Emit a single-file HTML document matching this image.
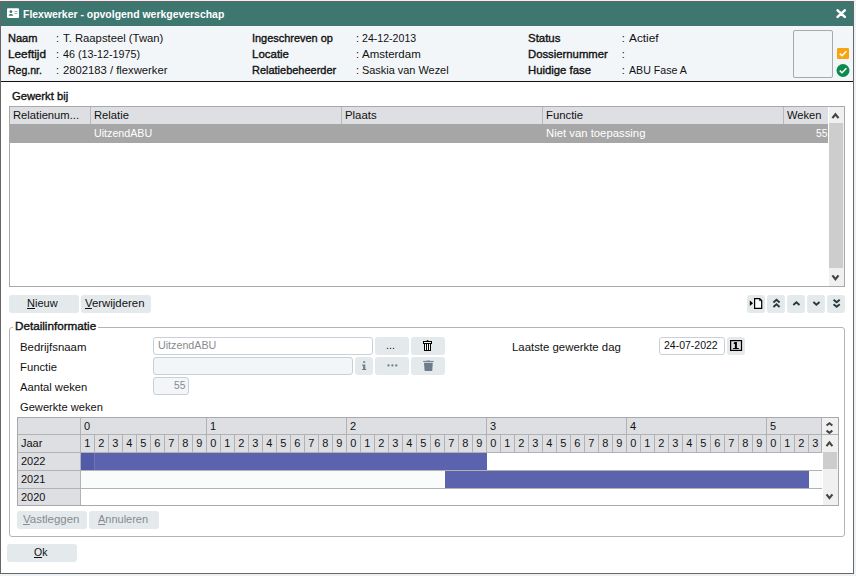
<!DOCTYPE html>
<html><head><meta charset="utf-8">
<style>
*{box-sizing:border-box;margin:0;padding:0}
html,body{width:856px;height:576px;overflow:hidden;background:#eef2f4}
body{font-family:"Liberation Sans",sans-serif;font-size:11px;color:#111;position:relative}
.a{position:absolute}
.t{position:absolute;transform-origin:0 0;white-space:nowrap;line-height:14px;height:14px}
.bb{font-weight:bold}
.b{font-weight:normal;-webkit-text-stroke:.35px}
#win{left:0;top:1px;width:854px;height:573px;border:1px solid #666;background:#fff}
#title{left:1px;top:2px;width:852px;height:24px;background:#3e7670}
#info{left:1px;top:26px;width:852px;height:55px;background:#f3f6f9}
#infoline{left:1px;top:81px;width:852px;height:1px;background:#111}
.btn{position:absolute;background:#e4e9ec;border-radius:3px;height:18px}
.inp{position:absolute;height:18px;border:1px solid #c8cfd6;border-radius:3px;background:#fff}
.dis{background:#f3f6f9}
u{text-decoration:underline}
.hl{position:absolute;background:#b9b9b9;height:1px}
.vl{position:absolute;background:#b9b9b9;width:1px}
</style></head><body>
<div id="win" class="a"></div>
<div id="title" class="a"></div>
<div id="info" class="a"></div>
<div id="infoline" class="a"></div>

<svg class="a" style="left:7px;top:8px" width="12" height="10" viewBox="0 0 12 10"><rect x="0" y="0.2" width="12" height="9.8" rx="1" fill="#fff"/><circle cx="3.9" cy="3.7" r="1.35" fill="#3e7670"/><path d="M1.7 7.7 C1.7 5.5 6.1 5.5 6.1 7.7Z" fill="#3e7670"/><rect x="7.6" y="3" width="2.8" height="1" fill="#3e7670" opacity=".6"/><rect x="7.6" y="5" width="2.8" height="1" fill="#3e7670" opacity=".6"/></svg>
<svg class="a" style="left:836px;top:9px" width="11" height="10" viewBox="0 0 11 10"><path d="M1.6 1.3 L8.8 7.9 M8.8 1.3 L1.6 7.9" stroke="#fff" stroke-width="2.5" stroke-linecap="round"/></svg>

<div class="a" style="left:793px;top:30px;width:40px;height:48px;border:1px solid #a9a9a9;border-radius:2px"></div>
<svg class="a" style="left:837px;top:48px" width="12" height="11" viewBox="0 0 12 11"><rect width="12" height="11" rx="1.2" fill="#f9a30e"/><path d="M2.8 5.6 L5 7.8 L9.4 3.2" stroke="#fff" stroke-width="1.5" fill="none"/></svg>
<svg class="a" style="left:836px;top:64px" width="14" height="13" viewBox="0 0 14 13"><circle cx="7" cy="6.5" r="6.5" fill="#0b8a4b"/><path d="M3.8 6.6 L6 8.8 L10.4 4.2" stroke="#fff" stroke-width="1.5" fill="none"/></svg>

<!-- table -->
<div class="a" style="left:9px;top:106px;width:836px;height:181px;border:1px solid #a9a9a9;background:#fff"></div>
<div class="a" style="left:10px;top:107px;width:818px;height:17px;background:#dedfe3"></div>
<div class="a" style="left:10px;top:124px;width:818px;height:19px;background:#a6a6a6"></div>
<div class="vl" style="left:90px;top:107px;height:17px"></div>
<div class="vl" style="left:341px;top:107px;height:17px"></div>
<div class="vl" style="left:542px;top:107px;height:17px"></div>
<div class="vl" style="left:783px;top:107px;height:17px"></div>
<div class="a" style="left:829px;top:107px;width:15px;height:179px;background:#f0f0f0"></div>
<div class="a" style="left:829px;top:123px;width:14px;height:145px;background:#cdcdcd"></div>
<svg class="a" style="left:828px;top:107px" width="16" height="17" viewBox="0 0 16 17"><path d="M4.4 11.1 L7.45 7.2 L10.5 11.1" stroke="#454545" stroke-width="2.2" fill="none"/></svg>
<svg class="a" style="left:828px;top:269px" width="16" height="17" viewBox="0 0 16 17"><path d="M4.4 6.4 L7.45 10.3 L10.5 6.4" stroke="#454545" stroke-width="2.2" fill="none"/></svg>

<!-- buttons -->
<div class="btn" style="left:9px;top:295px;width:70px"></div>
<div class="btn" style="left:81px;top:295px;width:70px"></div>
<div class="btn" style="left:747px;top:295px;width:18px"></div>
<div class="btn" style="left:767px;top:295px;width:18px"></div>
<div class="btn" style="left:787px;top:295px;width:18px"></div>
<div class="btn" style="left:807px;top:295px;width:18px"></div>
<div class="btn" style="left:827px;top:295px;width:18px"></div>

<!-- fieldset -->
<div class="a" style="left:9px;top:327px;width:836px;height:210px;border:1px solid #b4b4b4;border-radius:3px"></div>
<div class="a" style="left:13px;top:326px;width:85px;height:3px;background:#fff"></div>
<div class="inp" style="left:153px;top:337px;width:220px"></div>
<div class="inp dis" style="left:153px;top:357px;width:200px"></div>
<div class="inp dis" style="left:153px;top:377px;width:36px"></div>
<div class="btn" style="left:375px;top:337px;width:34px"></div>
<div class="btn" style="left:411px;top:337px;width:34px"></div>
<div class="btn" style="left:355px;top:357px;width:18px"></div>
<div class="btn" style="left:375px;top:357px;width:34px"></div>
<div class="btn" style="left:411px;top:357px;width:34px"></div>
<div class="inp" style="left:659px;top:337px;width:66px"></div>
<div class="btn" style="left:727px;top:337px;width:18px"></div>

<div class="btn" style="left:17px;top:511px;width:70px"></div>
<div class="btn" style="left:89px;top:511px;width:70px"></div>
<div class="btn" style="left:7px;top:544px;width:70px"></div>

<!-- toolbar icons -->
<svg class="a" style="left:747px;top:295px" width="18" height="18" viewBox="0 0 18 18"><path d="M2.8 5.5 L6 8.25 L2.8 11 Z" fill="#000"/><path d="M7.6 3.6 H12.7 L14.7 5.6 V13.3 H7.6 Z" fill="#fff" stroke="#000" stroke-width="1.2"/><path d="M12.6 3.6 V5.7 H14.7" fill="none" stroke="#000" stroke-width=".8"/></svg>
<svg class="a" style="left:767px;top:295px" width="18" height="18" viewBox="0 0 18 18"><path d="M6.4 7.4 L9.5 4.8 L12.6 7.4 M6.4 11.9 L9.5 9.3 L12.6 11.9" fill="none" stroke="#2a3840" stroke-width="1.9"/></svg>
<svg class="a" style="left:787px;top:295px" width="18" height="18" viewBox="0 0 18 18"><path d="M6.3 10 L9.4 7.3 L12.5 10" fill="none" stroke="#2a3840" stroke-width="1.9"/></svg>
<svg class="a" style="left:807px;top:295px" width="18" height="18" viewBox="0 0 18 18"><path d="M6.35 7 L9.45 9.7 L12.55 7" fill="none" stroke="#2a3840" stroke-width="1.9"/></svg>
<svg class="a" style="left:827px;top:295px" width="18" height="18" viewBox="0 0 18 18"><path d="M6.55 4.75 L9.65 7.35 L12.75 4.75 M6.55 9.15 L9.65 11.75 L12.75 9.15" fill="none" stroke="#2a3840" stroke-width="1.9"/></svg>
<!-- trash 1 (outlined black) -->
<svg class="a" style="left:411px;top:337px" width="34" height="18" viewBox="0 0 34 18"><path d="M15.4 4.5 L16.5 3.2 L17.6 4.5" fill="none" stroke="#000" stroke-width="1"/><rect x="12.5" y="4.5" width="8" height="2" fill="#fff" stroke="#000" stroke-width="1"/><rect x="13.5" y="6.5" width="6" height="7" fill="#fff" stroke="#000" stroke-width="1"/><path d="M15.5 6.5 V13.5 M17.5 6.5 V13.5" stroke="#000" stroke-width="1"/></svg>
<!-- i -->
<svg class="a" style="left:355px;top:357px" width="18" height="18" viewBox="0 0 18 18"><rect x="8" y="4.1" width="2.3" height="2" rx=".7" fill="#76828e" opacity=".85"/><path d="M7.1 7.6 H10.3 V12 H11.3 V13.1 H7.1 V12 H8.1 V8.7 H7.1 Z" fill="#727e8a"/></svg>
<!-- dots disabled -->
<svg class="a" style="left:375px;top:357px" width="34" height="18" viewBox="0 0 34 18"><circle cx="13.5" cy="8.4" r="1.15" fill="#707c88"/><circle cx="17.4" cy="8.4" r="1.15" fill="#707c88"/><circle cx="21.3" cy="8.4" r="1.15" fill="#707c88"/></svg>
<!-- trash 2 (filled gray) -->
<svg class="a" style="left:411px;top:357px" width="34" height="18" viewBox="0 0 34 18"><rect x="15.6" y="3.2" width="3.4" height="1" fill="#6e7b8a" opacity=".55"/><rect x="12.1" y="3.9" width="10.5" height="1.1" fill="#6e7b8a" opacity=".9"/><path d="M13 5.8 H21.8 L21.3 13.2 Q21.2 13.9 20.5 13.9 H14.3 Q13.6 13.9 13.5 13.2 Z" fill="#6e7b8a"/></svg>
<!-- calendar -->
<svg class="a" style="left:727px;top:337px" width="18" height="18" viewBox="0 0 18 18"><rect x="3.6" y="3.6" width="10.9" height="9.8" fill="#dcdcdc" stroke="#000" stroke-width="1.2"/><path d="M7.9 5.1 H9.9 V11 H11.8 V12 H6.1 V11 H7.9 V6.9 H6.7 V6 Z" fill="#000"/></svg>
<div class="a" style="left:17px;top:417px;width:822px;height:89px;border:1px solid #a9a9a9;background:#fff"></div>
<div class="a" style="left:18px;top:418px;width:803px;height:34px;background:#dedfe3"></div>
<div class="a" style="left:18px;top:452px;width:62px;height:53px;background:#dedfe3"></div>
<div class="a" style="left:81px;top:471px;width:741px;height:17px;background:#fafbfb"></div>
<div class="a" style="left:81px;top:453px;width:406px;height:17px;background:#5b63ae"></div>
<div class="a" style="left:81px;top:453px;width:13px;height:17px;background:#535ba8"></div>
<div class="a" style="left:94px;top:453px;width:1px;height:17px;background:#6e76b8"></div>
<div class="a" style="left:445px;top:471px;width:364px;height:17px;background:#5b63ae"></div>
<div class="hl" style="left:18px;top:434px;width:804px;background:#b2b2b2"></div>
<div class="hl" style="left:18px;top:452px;width:804px;background:#b2b2b2"></div>
<div class="hl" style="left:18px;top:470px;width:804px;background:#b2b2b2"></div>
<div class="hl" style="left:18px;top:488px;width:804px;background:#b2b2b2"></div>
<div class="vl" style="left:80px;top:418px;height:87px;background:#b2b2b2"></div>
<div class="vl" style="left:206px;top:418px;height:34px;background:#b2b2b2"></div>
<div class="vl" style="left:346px;top:418px;height:34px;background:#b2b2b2"></div>
<div class="vl" style="left:486px;top:418px;height:34px;background:#b2b2b2"></div>
<div class="vl" style="left:626px;top:418px;height:34px;background:#b2b2b2"></div>
<div class="vl" style="left:766px;top:418px;height:34px;background:#b2b2b2"></div>
<div class="vl" style="left:94px;top:435px;height:17px;background:#b2b2b2"></div>
<div class="vl" style="left:108px;top:435px;height:17px;background:#b2b2b2"></div>
<div class="vl" style="left:122px;top:435px;height:17px;background:#b2b2b2"></div>
<div class="vl" style="left:136px;top:435px;height:17px;background:#b2b2b2"></div>
<div class="vl" style="left:150px;top:435px;height:17px;background:#b2b2b2"></div>
<div class="vl" style="left:164px;top:435px;height:17px;background:#b2b2b2"></div>
<div class="vl" style="left:178px;top:435px;height:17px;background:#b2b2b2"></div>
<div class="vl" style="left:192px;top:435px;height:17px;background:#b2b2b2"></div>
<div class="vl" style="left:220px;top:435px;height:17px;background:#b2b2b2"></div>
<div class="vl" style="left:234px;top:435px;height:17px;background:#b2b2b2"></div>
<div class="vl" style="left:248px;top:435px;height:17px;background:#b2b2b2"></div>
<div class="vl" style="left:262px;top:435px;height:17px;background:#b2b2b2"></div>
<div class="vl" style="left:276px;top:435px;height:17px;background:#b2b2b2"></div>
<div class="vl" style="left:290px;top:435px;height:17px;background:#b2b2b2"></div>
<div class="vl" style="left:304px;top:435px;height:17px;background:#b2b2b2"></div>
<div class="vl" style="left:318px;top:435px;height:17px;background:#b2b2b2"></div>
<div class="vl" style="left:332px;top:435px;height:17px;background:#b2b2b2"></div>
<div class="vl" style="left:360px;top:435px;height:17px;background:#b2b2b2"></div>
<div class="vl" style="left:374px;top:435px;height:17px;background:#b2b2b2"></div>
<div class="vl" style="left:388px;top:435px;height:17px;background:#b2b2b2"></div>
<div class="vl" style="left:402px;top:435px;height:17px;background:#b2b2b2"></div>
<div class="vl" style="left:416px;top:435px;height:17px;background:#b2b2b2"></div>
<div class="vl" style="left:430px;top:435px;height:17px;background:#b2b2b2"></div>
<div class="vl" style="left:444px;top:435px;height:17px;background:#b2b2b2"></div>
<div class="vl" style="left:458px;top:435px;height:17px;background:#b2b2b2"></div>
<div class="vl" style="left:472px;top:435px;height:17px;background:#b2b2b2"></div>
<div class="vl" style="left:500px;top:435px;height:17px;background:#b2b2b2"></div>
<div class="vl" style="left:514px;top:435px;height:17px;background:#b2b2b2"></div>
<div class="vl" style="left:528px;top:435px;height:17px;background:#b2b2b2"></div>
<div class="vl" style="left:542px;top:435px;height:17px;background:#b2b2b2"></div>
<div class="vl" style="left:556px;top:435px;height:17px;background:#b2b2b2"></div>
<div class="vl" style="left:570px;top:435px;height:17px;background:#b2b2b2"></div>
<div class="vl" style="left:584px;top:435px;height:17px;background:#b2b2b2"></div>
<div class="vl" style="left:598px;top:435px;height:17px;background:#b2b2b2"></div>
<div class="vl" style="left:612px;top:435px;height:17px;background:#b2b2b2"></div>
<div class="vl" style="left:640px;top:435px;height:17px;background:#b2b2b2"></div>
<div class="vl" style="left:654px;top:435px;height:17px;background:#b2b2b2"></div>
<div class="vl" style="left:668px;top:435px;height:17px;background:#b2b2b2"></div>
<div class="vl" style="left:682px;top:435px;height:17px;background:#b2b2b2"></div>
<div class="vl" style="left:696px;top:435px;height:17px;background:#b2b2b2"></div>
<div class="vl" style="left:710px;top:435px;height:17px;background:#b2b2b2"></div>
<div class="vl" style="left:724px;top:435px;height:17px;background:#b2b2b2"></div>
<div class="vl" style="left:738px;top:435px;height:17px;background:#b2b2b2"></div>
<div class="vl" style="left:752px;top:435px;height:17px;background:#b2b2b2"></div>
<div class="vl" style="left:780px;top:435px;height:17px;background:#b2b2b2"></div>
<div class="vl" style="left:794px;top:435px;height:17px;background:#b2b2b2"></div>
<div class="vl" style="left:808px;top:435px;height:17px;background:#b2b2b2"></div>
<div class="t" style="left:84px;top:419px">0</div>
<div class="t" style="left:210px;top:419px">1</div>
<div class="t" style="left:350px;top:419px">2</div>
<div class="t" style="left:490px;top:419px">3</div>
<div class="t" style="left:630px;top:419px">4</div>
<div class="t" style="left:770px;top:419px">5</div>
<div class="t" style="left:80.3px;top:436px;width:14px;text-align:center">1</div>
<div class="t" style="left:94.3px;top:436px;width:14px;text-align:center">2</div>
<div class="t" style="left:108.3px;top:436px;width:14px;text-align:center">3</div>
<div class="t" style="left:122.3px;top:436px;width:14px;text-align:center">4</div>
<div class="t" style="left:136.3px;top:436px;width:14px;text-align:center">5</div>
<div class="t" style="left:150.3px;top:436px;width:14px;text-align:center">6</div>
<div class="t" style="left:164.3px;top:436px;width:14px;text-align:center">7</div>
<div class="t" style="left:178.3px;top:436px;width:14px;text-align:center">8</div>
<div class="t" style="left:192.3px;top:436px;width:14px;text-align:center">9</div>
<div class="t" style="left:206.3px;top:436px;width:14px;text-align:center">0</div>
<div class="t" style="left:220.3px;top:436px;width:14px;text-align:center">1</div>
<div class="t" style="left:234.3px;top:436px;width:14px;text-align:center">2</div>
<div class="t" style="left:248.3px;top:436px;width:14px;text-align:center">3</div>
<div class="t" style="left:262.3px;top:436px;width:14px;text-align:center">4</div>
<div class="t" style="left:276.3px;top:436px;width:14px;text-align:center">5</div>
<div class="t" style="left:290.3px;top:436px;width:14px;text-align:center">6</div>
<div class="t" style="left:304.3px;top:436px;width:14px;text-align:center">7</div>
<div class="t" style="left:318.3px;top:436px;width:14px;text-align:center">8</div>
<div class="t" style="left:332.3px;top:436px;width:14px;text-align:center">9</div>
<div class="t" style="left:346.3px;top:436px;width:14px;text-align:center">0</div>
<div class="t" style="left:360.3px;top:436px;width:14px;text-align:center">1</div>
<div class="t" style="left:374.3px;top:436px;width:14px;text-align:center">2</div>
<div class="t" style="left:388.3px;top:436px;width:14px;text-align:center">3</div>
<div class="t" style="left:402.3px;top:436px;width:14px;text-align:center">4</div>
<div class="t" style="left:416.3px;top:436px;width:14px;text-align:center">5</div>
<div class="t" style="left:430.3px;top:436px;width:14px;text-align:center">6</div>
<div class="t" style="left:444.3px;top:436px;width:14px;text-align:center">7</div>
<div class="t" style="left:458.3px;top:436px;width:14px;text-align:center">8</div>
<div class="t" style="left:472.3px;top:436px;width:14px;text-align:center">9</div>
<div class="t" style="left:486.3px;top:436px;width:14px;text-align:center">0</div>
<div class="t" style="left:500.3px;top:436px;width:14px;text-align:center">1</div>
<div class="t" style="left:514.3px;top:436px;width:14px;text-align:center">2</div>
<div class="t" style="left:528.3px;top:436px;width:14px;text-align:center">3</div>
<div class="t" style="left:542.3px;top:436px;width:14px;text-align:center">4</div>
<div class="t" style="left:556.3px;top:436px;width:14px;text-align:center">5</div>
<div class="t" style="left:570.3px;top:436px;width:14px;text-align:center">6</div>
<div class="t" style="left:584.3px;top:436px;width:14px;text-align:center">7</div>
<div class="t" style="left:598.3px;top:436px;width:14px;text-align:center">8</div>
<div class="t" style="left:612.3px;top:436px;width:14px;text-align:center">9</div>
<div class="t" style="left:626.3px;top:436px;width:14px;text-align:center">0</div>
<div class="t" style="left:640.3px;top:436px;width:14px;text-align:center">1</div>
<div class="t" style="left:654.3px;top:436px;width:14px;text-align:center">2</div>
<div class="t" style="left:668.3px;top:436px;width:14px;text-align:center">3</div>
<div class="t" style="left:682.3px;top:436px;width:14px;text-align:center">4</div>
<div class="t" style="left:696.3px;top:436px;width:14px;text-align:center">5</div>
<div class="t" style="left:710.3px;top:436px;width:14px;text-align:center">6</div>
<div class="t" style="left:724.3px;top:436px;width:14px;text-align:center">7</div>
<div class="t" style="left:738.3px;top:436px;width:14px;text-align:center">8</div>
<div class="t" style="left:752.3px;top:436px;width:14px;text-align:center">9</div>
<div class="t" style="left:766.3px;top:436px;width:14px;text-align:center">0</div>
<div class="t" style="left:780.3px;top:436px;width:14px;text-align:center">1</div>
<div class="t" style="left:794.3px;top:436px;width:14px;text-align:center">2</div>
<div class="t" style="left:808.3px;top:436px;width:14px;text-align:center">3</div>
<div class="a" style="left:822px;top:418px;width:16px;height:35px;background:#f0f0f0"></div>
<div class="a" style="left:823px;top:453px;width:15px;height:52px;background:#f0f0f0"></div>
<div class="vl" style="left:821px;top:418px;height:34px;background:#b2b2b2"></div>
<div class="hl" style="left:822px;top:434px;width:16px;background:#b2b2b2"></div>
<div class="a" style="left:823px;top:452px;width:14px;height:17px;background:#cdcdcd"></div>
<svg class="a" style="left:822px;top:418px" width="16" height="16" viewBox="0 0 16 16"><path d="M4.55 7.5 L7.45 5.2 L10.35 7.5 M4.55 12.6 L7.45 14.9 L10.35 12.6" stroke="#454545" stroke-width="2" fill="none"/></svg>
<svg class="a" style="left:822px;top:436px" width="16" height="16" viewBox="0 0 16 16"><path d="M4.5 10.1 L7.45 6.4 L10.4 10.1" stroke="#454545" stroke-width="2.2" fill="none"/></svg>
<svg class="a" style="left:822px;top:489px" width="16" height="16" viewBox="0 0 16 16"><path d="M4.5 5.4 L7.45 9.1 L10.4 5.4" stroke="#454545" stroke-width="2.2" fill="none"/></svg>
<div class="t bb" id="ttl" style="left:22.50px;top:7.19px;transform:scaleX(0.9488);color:#fff;">Flexwerker - opvolgend werkgeverschap</div>
<div class="t b" id="l1" style="left:7.74px;top:31.19px;transform:scaleX(1.0041);">Naam</div>
<div class="t " id="c1" style="left:55.62px;top:31.19px;transform:scaleX(0.9800);">:</div>
<div class="t " id="v1" style="left:62.70px;top:31.19px;transform:scaleX(1.0259);">T. Raapsteel (Twan)</div>
<div class="t b" id="l2" style="left:7.59px;top:47.19px;transform:scaleX(1.0698);">Leeftijd</div>
<div class="t " id="c2" style="left:55.62px;top:47.19px;transform:scaleX(0.9800);">:</div>
<div class="t " id="v2" style="left:62.52px;top:47.19px;transform:scaleX(0.9755);">46 (13-12-1975)</div>
<div class="t b" id="l3" style="left:7.69px;top:63.19px;transform:scaleX(0.9571);">Reg.nr.</div>
<div class="t " id="c3" style="left:55.63px;top:63.19px;transform:scaleX(0.9800);">:</div>
<div class="t " id="v3" style="left:62.60px;top:63.19px;transform:scaleX(1.0222);">2802183 / flexwerker</div>
<div class="t b" id="l4" style="left:251.53px;top:31.19px;transform:scaleX(0.9941);">Ingeschreven op</div>
<div class="t " id="c4" style="left:355.63px;top:31.19px;transform:scaleX(0.9800);">:</div>
<div class="t " id="v4" style="left:361.63px;top:31.19px;transform:scaleX(0.9631);">24-12-2013</div>
<div class="t b" id="l5" style="left:251.78px;top:47.19px;transform:scaleX(1.0433);">Locatie</div>
<div class="t " id="c5" style="left:355.60px;top:47.19px;transform:scaleX(0.9800);">:</div>
<div class="t " id="v5" style="left:361.54px;top:47.19px;transform:scaleX(1.0440);">Amsterdam</div>
<div class="t b" id="l6" style="left:251.54px;top:63.19px;transform:scaleX(0.9973);">Relatiebeheerder</div>
<div class="t " id="c6" style="left:355.63px;top:63.19px;transform:scaleX(0.9800);">:</div>
<div class="t " id="v6" style="left:361.59px;top:63.19px;transform:scaleX(0.9927);">Saskia van Wezel</div>
<div class="t b" id="l7" style="left:527.70px;top:31.19px;transform:scaleX(1.0410);">Status</div>
<div class="t " id="c7" style="left:621.69px;top:31.19px;transform:scaleX(1.0000);">:</div>
<div class="t " id="v7" style="left:628.55px;top:31.19px;transform:scaleX(1.0769);">Actief</div>
<div class="t b" id="l8" style="left:527.65px;top:47.19px;transform:scaleX(1.0276);">Dossiernummer</div>
<div class="t " id="c8" style="left:621.84px;top:47.19px;transform:scaleX(1.0000);">:</div>
<div class="t b" id="l9" style="left:527.58px;top:63.19px;transform:scaleX(1.0294);">Huidige fase</div>
<div class="t " id="c9" style="left:621.69px;top:63.19px;transform:scaleX(1.0000);">:</div>
<div class="t " id="v9" style="left:628.61px;top:63.19px;transform:scaleX(0.9661);">ABU Fase A</div>
<div class="t b" id="gb" style="left:11.73px;top:89.19px;transform:scaleX(1.0205);">Gewerkt bij</div>
<div class="t " id="h1" style="left:12.63px;top:108.19px;transform:scaleX(1.0182);">Relatienum...</div>
<div class="t " id="h2" style="left:93.66px;top:108.19px;transform:scaleX(1.0198);">Relatie</div>
<div class="t " id="h3" style="left:344.55px;top:108.19px;transform:scaleX(1.0350);">Plaats</div>
<div class="t " id="h4" style="left:545.59px;top:108.19px;transform:scaleX(1.0277);">Functie</div>
<div class="t " id="h5" style="left:786.59px;top:108.19px;transform:scaleX(1.0096);">Weken</div>
<div class="t " id="r1" style="left:93.72px;top:126.19px;transform:scaleX(0.9704);color:#fff;">UitzendABU</div>
<div class="t " id="r2" style="left:545.65px;top:126.19px;transform:scaleX(1.0292);color:#fff;">Niet van toepassing</div>
<div class="t " id="r3" style="left:815.51px;top:126.19px;transform:scaleX(0.9420);color:#fff;">55</div>
<div class="t " id="b1" style="left:26.72px;top:296.19px;transform:scaleX(1.0006);"><u>N</u>ieuw</div>
<div class="t " id="b2" style="left:84.87px;top:296.19px;transform:scaleX(1.0347);"><u>V</u>erwijderen</div>
<div class="t b" id="lg" style="left:14.70px;top:319.19px;transform:scaleX(1.0620);">Detailinformatie</div>
<div class="t " id="f1" style="left:19.59px;top:339.69px;transform:scaleX(1.0347);">Bedrijfsnaam</div>
<div class="t " id="f2" style="left:19.61px;top:359.69px;transform:scaleX(1.0232);">Functie</div>
<div class="t " id="f3" style="left:19.99px;top:379.69px;transform:scaleX(1.0180);">Aantal weken</div>
<div class="t " id="f4" style="left:19.75px;top:399.69px;transform:scaleX(1.0115);">Gewerkte weken</div>
<div class="t " id="i1" style="left:157.68px;top:338.19px;transform:scaleX(0.9728);color:#8a8a8a;">UitzendABU</div>
<div class="t " id="i3" style="left:173.58px;top:378.19px;transform:scaleX(0.9334);color:#8a8a8a;">55</div>
<div class="t " id="d1" style="left:385.73px;top:338.19px;transform:scaleX(0.9774);">...</div>
<div class="t " id="f5" style="left:511.69px;top:339.69px;transform:scaleX(1.0347);">Laatste gewerkte dag</div>
<div class="t " id="i5" style="left:663.67px;top:338.19px;transform:scaleX(0.9546);">24-07-2022</div>
<div class="t " id="b3" style="left:22.74px;top:512.19px;transform:scaleX(1.0407);color:#858b91;"><u>V</u>astleggen</div>
<div class="t " id="b4" style="left:97.73px;top:512.19px;transform:scaleX(0.9985);color:#858b91;"><u>A</u>nnuleren</div>
<div class="t " id="b5" style="left:33.53px;top:545.19px;transform:scaleX(0.9498);"><u>O</u>k</div>
<div class="t " id="gj" style="left:20.61px;top:436.19px;transform:scaleX(0.9998);">Jaar</div>
<div class="t " id="gy0" style="left:20.52px;top:454.19px;transform:scaleX(0.9997);">2022</div>
<div class="t " id="gy1" style="left:20.72px;top:472.19px;transform:scaleX(0.9943);">2021</div>
<div class="t " id="gy2" style="left:20.67px;top:490.19px;transform:scaleX(0.9913);">2020</div>
</body></html>
